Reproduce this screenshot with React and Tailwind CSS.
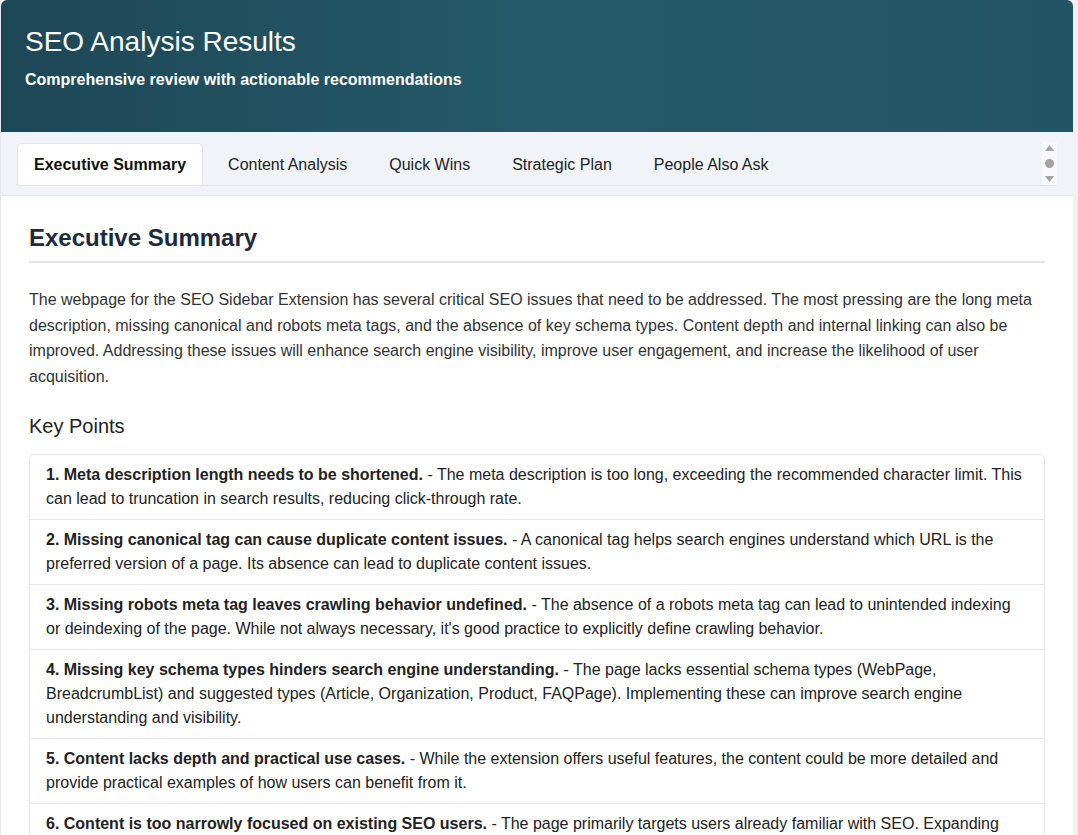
const tabs = ["Executive Summary", "Content Analysis", "Quick Wins", "Strategic Plan", "People Also Ask"];

const points = [
  {
    title: "1. Meta description length needs to be shortened.",
    text: "The meta description is too long, exceeding the recommended character limit. This can lead to truncation in search results, reducing click-through rate.",
  },
  {
    title: "2. Missing canonical tag can cause duplicate content issues.",
    text: "A canonical tag helps search engines understand which URL is the preferred version of a page. Its absence can lead to duplicate content issues.",
  },
  {
    title: "3. Missing robots meta tag leaves crawling behavior undefined.",
    text: "The absence of a robots meta tag can lead to unintended indexing or deindexing of the page. While not always necessary, it's good practice to explicitly define crawling behavior.",
  },
  {
    title: "4. Missing key schema types hinders search engine understanding.",
    text: "The page lacks essential schema types (WebPage, BreadcrumbList) and suggested types (Article, Organization, Product, FAQPage). Implementing these can improve search engine understanding and visibility.",
  },
  {
    title: "5. Content lacks depth and practical use cases.",
    text: "While the extension offers useful features, the content could be more detailed and provide practical examples of how users can benefit from it.",
  },
  {
    title: "6. Content is too narrowly focused on existing SEO users.",
    text: "The page primarily targets users already familiar with SEO. Expanding the content to address beginners and marketers could broaden the audience.",
  },
];

export default function App() {
  return (
    <div className="h-screen overflow-hidden flex bg-white font-['Liberation_Sans',Arial,sans-serif]">
      <div className="flex-1 flex flex-col border-l border-[#e5e7eb]">
        {/* Header */}
        <header className="h-[132px] shrink-0 rounded-t-[6px] bg-gradient-to-r from-[#1e4756] via-[#245a69] to-[#225465] px-[24px] pt-[25px] text-white">
          <h1 className="text-[28px] leading-[34px] font-normal">SEO Analysis Results</h1>
          <p className="mt-[11px] text-[16px] leading-[20px] font-bold">
            Comprehensive review with actionable recommendations
          </p>
        </header>

        {/* Tabs */}
        <div className="shrink-0 bg-[#f0f4f9] border-b border-[#e3e6ea] pl-[16px] pr-[16px] pt-[10px] pb-[9px]">
          <div className="flex items-stretch h-[44px] border-b border-[#e2e5ea]">
            <div className="flex-1 flex gap-[8px] pt-[1px]">
              {tabs.map((t, i) => (
                <div
                  key={t}
                  className={
                    i === 0
                      ? "px-[16px] flex items-center text-[16px] font-bold text-[#111] bg-white border border-[#e2e5ea] border-b-0 rounded-t-[5px]"
                      : "px-[16px] flex items-center text-[16px] text-[#222] border border-transparent border-b-0"
                  }
                >
                  {t}
                </div>
              ))}
            </div>
            <div className="w-[15px] bg-[#f7f9fc] flex flex-col items-center justify-between py-[3px]">
              <svg width="9" height="6" viewBox="0 0 9 6"><path d="M4.5 0L9 6H0z" fill="#a3a3a3" /></svg>
              <div className="w-[9px] h-[9px] rounded-full bg-[#a3a3a3]" />
              <svg width="9" height="6" viewBox="0 0 9 6"><path d="M0 0h9L4.5 6z" fill="#a3a3a3" /></svg>
            </div>
          </div>
        </div>

        {/* Content */}
        <main className="flex-1 px-[28px] pt-[27px]">
          <h2 className="text-[24px] leading-[29px] font-bold text-[#1e2a3b] pb-[9px] border-b-2 border-[#e3e4ef]">
            Executive Summary
          </h2>
          <p className="mt-[24px] text-[16px] leading-[1.6] text-[#333]">
            The webpage for the SEO Sidebar Extension has several critical SEO issues that need to be addressed. The most pressing are the long meta description, missing canonical and robots meta tags, and the absence of key schema types. Content depth and internal linking can also be improved. Addressing these issues will enhance search engine visibility, improve user engagement, and increase the likelihood of user acquisition.
          </p>
          <h3 className="mt-[25px] text-[20px] leading-[24px] font-normal text-[#222]">Key Points</h3>
          <ul className="mt-[16px] border border-[#e5e7eb] rounded-[5px]">
            {points.map((p, i) => (
              <li
                key={i}
                className={`pl-[16px] pr-[20px] py-[8px] text-[16px] leading-[24px] text-[#222] ${i > 0 ? "border-t border-[#e5e7eb]" : ""}`}
              >
                <strong className="font-bold">{p.title}</strong> - {p.text}
              </li>
            ))}
          </ul>
        </main>
      </div>
      <div className="w-[5px] shrink-0 bg-[#f1f1f1]" />
    </div>
  );
}
